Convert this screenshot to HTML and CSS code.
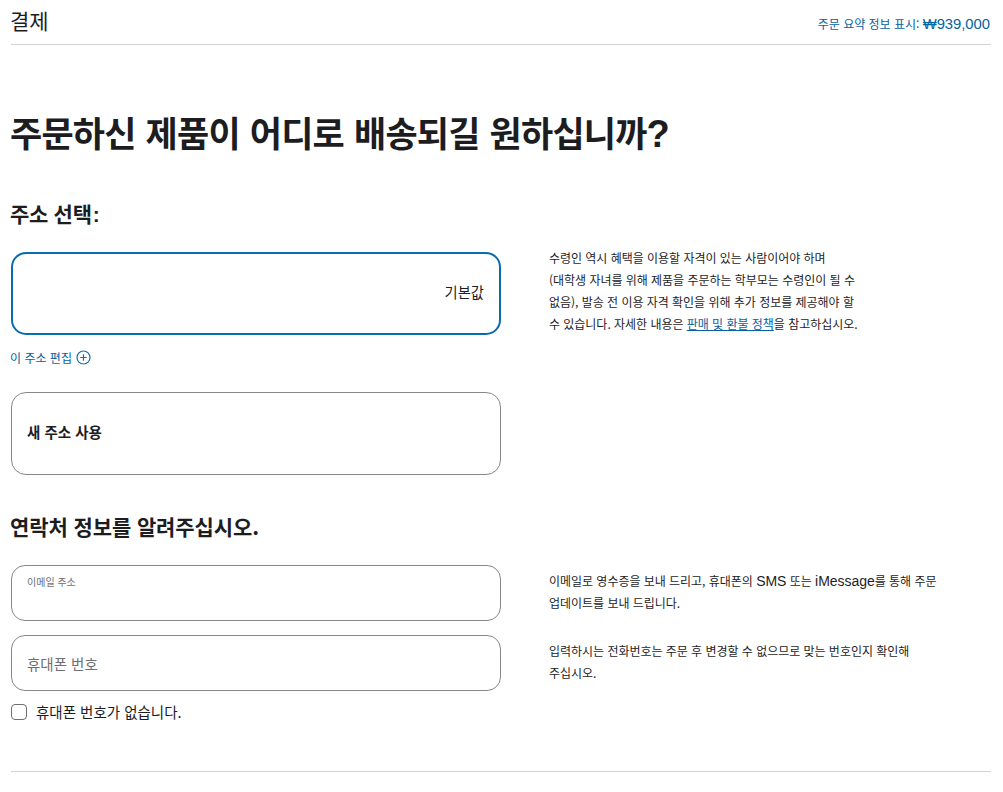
FILE: index.html
```html
<!DOCTYPE html>
<html lang="ko">
<head>
<meta charset="utf-8">
<title>결제</title>
<link rel="stylesheet" href="styles.css">
</head>
<body>
<header class="topbar">
  <div class="topbar-title">결제</div>
  <a class="summary-link">주문 요약 정보 표시: <span class="summary-price">₩939,000</span></a>
</header>
<main>
  <h1 class="page-title">주문하신 제품이 어디로 배송되길 원하십니까<span class="title-mark">?</span></h1>
  <h2 class="address-title">주소 선택<span class="title-colon">:</span></h2>
  <section class="row row-address">
    <div class="col-left">
      <div class="card card-selected"><span class="default-tag">기본값</span></div>
      <a class="edit-link">이 주소 편집
        <svg class="plus-icon" width="15" height="15" viewBox="0 0 15 15" fill="none" aria-hidden="true"><circle cx="7.5" cy="7.5" r="6.5" stroke="#1a6aa6" stroke-width="1.2"/><path d="M7.5 4.3v6.4M4.3 7.5h6.4" stroke="#1a6aa6" stroke-width="1.2"/></svg>
      </a>
      <div class="card card-new"><span class="card-new-label">새 주소 사용</span></div>
    </div>
    <div class="col-right note">
      <p>수령인 역시 혜택을 이용할 자격이 있는 사람이어야 하며<br>(대학생 자녀를 위해 제품을 주문하는 학부모는 수령인이 될 수<br>없음), 발송 전 이용 자격 확인을 위해 추가 정보를 제공해야 할<br>수 있습니다. 자세한 내용은 <a class="note-link">판매 및 환불 정책</a>을 참고하십시오.</p>
    </div>
  </section>
  <h2 class="contact-title">연락처 정보를 알려주십시오.</h2>
  <section class="row row-contact">
    <div class="col-left">
      <div class="field field-email"><span class="field-small">이메일 주소</span></div>
      <div class="field field-phone"><span class="field-placeholder">휴대폰 번호</span></div>
      <label class="check-row"><span class="checkbox"></span><span class="check-label">휴대폰 번호가 없습니다.</span></label>
    </div>
    <div class="col-right note note-contact">
      <p>이메일로 영수증을 보내 드리고, 휴대폰의 <span class="latin">SMS</span> 또는 <span class="latin">iMessage</span>를 통해 주문<br>업데이트를 보내 드립니다.</p>
      <p>입력하시는 전화번호는 주문 후 변경할 수 없으므로 맞는 번호인지 확인해<br>주십시오.</p>
    </div>
  </section>
  <hr class="bottom-rule">
</main>
</body>
</html>
```
FILE: styles.css
```css
* { box-sizing: border-box; }
html, body { margin: 0; padding: 0; background: #fff; }
body {
  padding: 0 12px 0 11px;
  color: #1d1d1f;
  font-family: "Noto Sans CJK KR", "Noto Sans", sans-serif;
  height: 792px;
  overflow: hidden;
}
.topbar {
  display: flex;
  justify-content: space-between;
  align-items: center;
  height: 45px;
  border-bottom: 1px solid #d2d2d7;
}
.topbar-title { font-size: 21px; line-height: 40px; padding-bottom: 4px; margin-left: -1px; }
.summary-link { font-size: 12px; color: #06629f; padding: 3px 1px 0 0; letter-spacing: -0.02px; }
.summary-price { font-family: "Liberation Sans", sans-serif; font-size: 14.8px; line-height: 0; }
.page-title {
  margin: 62px 0 0 -1px;
  height: 50px;
  font-size: 35px;
  line-height: 50px;
  font-weight: 700;
  letter-spacing: -0.8px;
  word-spacing: 1px;
}
.title-mark { font-family: "Liberation Sans", sans-serif; font-size: 38px; line-height: 0; }
.address-title {
  margin: 41px 0 0 -1px;
  height: 30px;
  font-size: 21px;
  line-height: 30px;
  font-weight: 700;
  letter-spacing: -0.3px;
}
.title-colon { font-family: "Liberation Sans", sans-serif; margin-left: 1px; line-height: 0; }
.row {
  display: grid;
  grid-template-columns: 490px 1fr;
  column-gap: 48px;
}
.row-address { margin-top: 19px; }
.row-address .col-left { padding-top: 5px; }
.card { border-radius: 15px; width: 490px; display: flex; align-items: center; }
.card-selected {
  height: 83px;
  border: 2px solid #0a6cad;
  justify-content: flex-end;
  padding: 0 15px 4px 0;
}
.default-tag { font-size: 14.3px; }
.edit-link {
  display: flex;
  align-items: center;
  gap: 4px;
  margin: 13px 0 0 -1px;
  height: 18px;
  font-size: 12px;
  color: #06629f;
}
.card-new {
  height: 83px;
  margin-top: 26px;
  border: 1px solid #86868b;
  padding: 0 0 4px 15px;
}
.card-new-label { font-size: 14.5px; font-weight: 700; }
.note { font-size: 12px; line-height: 22px; color: #1d1d1f; letter-spacing: -0.03px; }
.note p { margin: 0; }
.note-link { color: #06629f; text-decoration: underline; }
.latin { font-family: "Liberation Sans", sans-serif; font-size: 14px; line-height: 0; }
.contact-title {
  margin: 36px 0 0 -1px;
  font-size: 21px;
  line-height: 30px;
  font-weight: 700;
  letter-spacing: -0.1px;
}
.row-contact { margin-top: 24px; }
.field {
  width: 490px;
  height: 56px;
  border: 1px solid #86868b;
  border-radius: 14px;
  padding-left: 15px;
}
.field-phone { margin-top: 14px; display: flex; align-items: center; }
.field-small { display: block; font-size: 10px; line-height: 14px; margin-top: 9px; color: #6e6e73; }
.field-placeholder { font-size: 14.5px; color: #6e6e73; }
.check-row { display: flex; align-items: center; gap: 9px; margin-top: 12px; }
.checkbox { width: 16px; height: 16px; border: 1px solid #6e6e73; border-radius: 4px; background: #fff; }
.check-label { font-size: 14.5px; line-height: 18px; }
.note-contact { padding-top: 5px; }
.note-contact p + p { margin-top: 26px; }
.bottom-rule { margin: 50px 0 0; border: 0; border-top: 1px solid #d2d2d7; }
```
